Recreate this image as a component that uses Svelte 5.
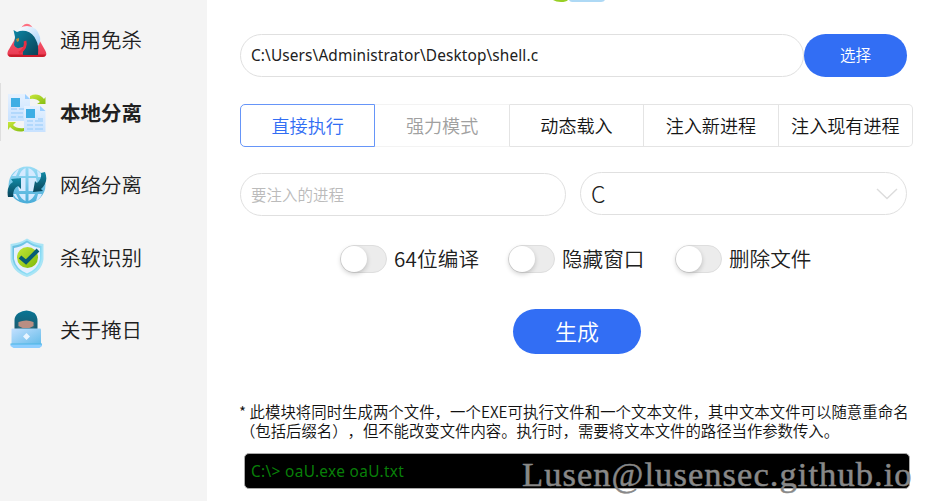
<script>
  const menu = [
    { id: 'trojan', label: '通用免杀' },
    { id: 'files', label: '本地分离' },
    { id: 'globe', label: '网络分离' },
    { id: 'shield', label: '杀软识别' },
    { id: 'hacker', label: '关于掩日' }
  ];
  const modes = ['直接执行', '强力模式', '动态载入', '注入新进程', '注入现有进程'];
  const options = ['64位编译', '隐藏窗口', '删除文件'];
</script>

<div class="app">
  <nav class="sidebar">
    {#each menu as item, i}
      <div class="item" class:active={i === 1}>
        <svg class="icon" viewBox="0 0 40 40" width="40" height="40">
          {#if item.id === 'trojan'}
            <defs>
              <linearGradient id="red" x1="0" y1="0" x2="0" y2="1"><stop offset="0" stop-color="#ff7183" /><stop offset="1" stop-color="#e93850" /></linearGradient>
              <linearGradient id="horse" x1="0" y1="0" x2="1" y2="1"><stop offset="0" stop-color="#0b86a5" /><stop offset="1" stop-color="#0b4055" /></linearGradient>
              <linearGradient id="mane" x1="0" y1="0" x2="1" y2="1"><stop offset="0" stop-color="#fff" /><stop offset="1" stop-color="#a5d1fb" /></linearGradient>
            </defs>
            <path d="M15.500 6Q20 1.500 24.500 6L38.500 31Q41 36.500 36 36.500H4Q-1 36.500 1 31Z" fill="url(#red)" />
            <path d="M1 34.500H39Q38.500 37 36 37H4Q1.500 37 1 34.500" fill="#c91c2b" />
            <path d="M10 13Q12 6 20 6Q30 6 33 17Q34 22 31 26L22 17Z" fill="url(#mane)" />
            <path d="M6.500 10L10 12Q14 10 19 11Q26 13 29 20Q32 25 31 35H16Q15 31 19 26L12 28Q9 29 7 25L8 17Z" fill="url(#horse)" />
            <path d="M18 21Q20 28 12 33" fill="none" stroke="#e72f43" stroke-width="2.800" />
            <path d="M9 19L12 18V21L10 22Z" fill="#b98c3d" />
          {:else if item.id === 'files'}
            <defs>
              <linearGradient id="paper" x1="0" y1="0" x2="0" y2="1"><stop offset="0" stop-color="#e5f1ff" /><stop offset="1" stop-color="#c8e2ff" /></linearGradient>
              <linearGradient id="lime" x1="0" y1="0" x2="1" y2="1"><stop offset="0" stop-color="#c8e73c" /><stop offset="1" stop-color="#86bd12" /></linearGradient>
            </defs>
            <path d="M23 3Q31-1 37 6L38.500 4V11H30L33 9Q29 5 23 6Z" fill="url(#lime)" />
            <path d="M17 38Q9 40 3 34L1 37V29H9L6 32Q10 36 17 35Z" fill="url(#lime)" />
            <path d="M1 1H18L23 6V28H1Z" fill="url(#paper)" />
            <path d="M18 6H23L18 1Z" fill="#9bcfff" />
            <path d="M17 13H34L38.500 18V39H17Z" fill="url(#paper)" />
            <path d="M33 18H38.500L33 13Z" fill="#9bcfff" />
            <path d="M4 5H13V14H4ZM19 16H28V25H19Z" fill="#3eaee4" />
            <path d="M4 16H10M12 16H17M4 20H16M4 24H9M11 24H16M31 26H36M20 28H26M28 28H36M20 32H26M28 32H36M20 36H26M28 36H36" stroke="#a8d3fc" stroke-width="1.500" />
          {:else if item.id === 'globe'}
            <defs>
              <linearGradient id="sphere" x1="0" y1="0" x2="0" y2="1"><stop offset="0" stop-color="#99dcf5" /><stop offset="1" stop-color="#49acd8" /></linearGradient>
              <linearGradient id="arrow" x1="0" y1="0" x2="0" y2="1"><stop offset="0" stop-color="#128aa6" /><stop offset="1" stop-color="#09445a" /></linearGradient>
            </defs>
            <circle cx="20" cy="20" r="18.500" fill="url(#sphere)" />
            <path d="M18.500 3V11H12Q14 5 18.500 3M21.500 3Q27 5 29 11H21.500ZM11 13H18.500V26H12Q10 20 11 13M21.500 13H29Q31 20 29 26H21.500ZM12 29H18.500V36Q14 34 12 29M21.500 29H28Q26 34 21.500 36ZM10 5Q11 5 12 4L9 11H5ZM30 5Q34 8 36 12H31ZM9 29L12 35Q8 33 6 29ZM31 29H35Q33 34 29 36Z" fill="#d5eaff" />
            <path d="M1 32Q-1 21 6 17L4 14L14 13V24L11 21Q6 23 6 32Z" fill="url(#arrow)" />
            <path d="M38 7Q42 17 34 24L36 26L26 27L28 16L30 18Q35 14 34 8Z" fill="url(#arrow)" />
          {:else if item.id === 'shield'}
            <defs>
              <linearGradient id="edge" x1="0" y1="0" x2="1" y2="1"><stop offset="0" stop-color="#64b9dc" /><stop offset="1" stop-color="#9aebff" /></linearGradient>
              <linearGradient id="disc" x1="0" y1="0" x2="1" y2="1"><stop offset="0" stop-color="#c3e638" /><stop offset="1" stop-color="#7fb90b" /></linearGradient>
            </defs>
            <path d="M20 .5Q27 5 36.500 6V21Q35 34 20 39Q5 34 3.500 21V6Q13 5 20 .5Z" fill="#a9e4f5" />
            <path d="M20 2.500Q27 7 34.500 8V21Q33 32 20 37Q7 32 5.500 21V8Q13 7 20 2.500Z" fill="url(#edge)" />
            <path d="M20 4.500Q27 9 33 10V21Q31 31 20 35.500Q9 31 7 21V10Q14 9 20 4.500Z" fill="#e5efff" />
            <circle cx="20.500" cy="19.500" r="10.500" fill="url(#disc)" />
            <path d="M13 19L19 24L31 12" fill="none" stroke="#075c75" stroke-width="4" />
          {:else}
            <defs>
              <linearGradient id="laptop" x1="0" y1="0" x2="1" y2="1"><stop offset="0" stop-color="#c3e0ff" /><stop offset="1" stop-color="#65bce9" /></linearGradient>
              <linearGradient id="hood" x1="0" y1="0" x2="0" y2="1"><stop offset="0" stop-color="#087695" /><stop offset="1" stop-color="#1e5669" /></linearGradient>
            </defs>
            <g transform="translate(-.5 -1)">
              <path d="M8 21V11Q8 7 12 4Q20-1 28 4Q31 7 31 12V22Z" fill="url(#hood)" />
              <path d="M11 14Q20 8 28 14V21H11Z" fill="#28687a" />
              <path d="M12 13Q20 10 27 13V17L23 19H16L12 17Z" fill="#b98e83" />
              <rect x="5" y="19.500" width="29.500" height="16" rx="1" fill="url(#laptop)" />
              <path d="M4 35H35.500V37L33 39H7L4 37Z" fill="#8dceff" />
              <path d="M4 35H35.500" stroke="#4cb6e6" />
              <path d="M20 24L23.500 27.500L20 31L16.500 27.500Z" fill="#e9f5ff" />
            </g>
          {/if}
        </svg>
        <span>{item.label}</span>
      </div>
    {/each}
  </nav>

  <main>
    <div class="logo"><svg width="54" height="2" viewBox="0 0 54 2"><path d="M0 0H15Q13 2 8 2Q3 2 0 0" fill="#98cf24" /><path d="M16 0H52Q51 2 48 2H19Q17 2 16 0" fill="#aed9f5" /></svg></div>

    <div class="file-row">
      <div class="field path"><span>C:\Users\Administrator\Desktop\shell.c</span></div>
      <button class="choose">选择</button>
    </div>

    <div class="modes">
      {#each modes as mode, i}
        <button class:selected={i === 0} class:disabled={i === 1}>{mode}</button>
      {/each}
    </div>

    <div class="inputs">
      <div class="field placeholder">要注入的进程</div>
      <div class="field select">
        <span>C</span>
        <svg width="22" height="12" viewBox="0 0 22 12"><path d="M1 1L11 10.500L21 1" fill="none" stroke="#dcdcdc" stroke-width="1.400" /></svg>
      </div>
    </div>

    <div class="options">
      {#each options as option}
        <label><i class="toggle"></i><span>{option}</span></label>
      {/each}
    </div>

    <button class="generate">生成</button>

    <div class="note">
      <div class="line1">* 此模块将同时生成两个文件，一个EXE可执行文件和一个文本文件，其中文本文件可以随意重命名</div>
      <div class="line2">（包括后缀名），但不能改变文件内容。执行时，需要将文本文件的路径当作参数传入。</div>
    </div>

    <div class="console"><span>C:\&gt; oaU.exe oaU.txt</span></div>
  </main>
  <div class="watermark">Lusen@lusensec.github.io</div>
</div>

<style>
  .app {
    position: relative;
    display: flex;
    width: 930px;
    height: 501px;
    overflow: hidden;
    background: #fff;
    color: #202020;
    font-family: 'Noto Sans', 'Noto Sans CJK SC', sans-serif;
  }
  .app * { box-sizing: border-box; }
  button { padding: 0; font-family: inherit; white-space: nowrap; }

  .sidebar { flex: none; width: 207px; padding-top: 4px; background: #f4f4f4; }
  .item { display: flex; align-items: center; height: 72.5px; padding-left: 7px; gap: 13px; font: 350 20.5px/30px 'Noto Sans CJK SC', sans-serif; }
  .item span { position: relative; top: -1px; }
  .active { font-weight: 700; background: linear-gradient(#dedede, #dedede) 0 6px / 1px 58px no-repeat; }
  .icon { flex: none; }

  main { width: 723px; padding-left: 33px; }
  .logo { height: 2px; padding-left: 313px; }
  .logo svg { display: block; }

  .field { display: flex; align-items: center; height: 43px; border: 1px solid #e0e0e0; border-radius: 22px; padding: 0 10px; }
  .file-row { display: flex; margin-top: 32px; }
  .path { width: 564px; font-size: 15.4px; letter-spacing: 0.12px; }
  .choose { width: 103px; height: 43px; padding-bottom: 2px; border: 0; border-radius: 22px; background: #326ef4; color: #fff; font-size: 15.5px; font-weight: 350; }

  .modes { display: flex; width: 673px; margin-top: 27px; }
  .modes button { flex: 1; height: 43px; padding-bottom: 2px; border: 1px solid #e4e4e4; border-left-width: 0; background: #fff; color: #151515; font: 350 18.1px/38px 'Noto Sans CJK SC', sans-serif; }
  .modes button:first-child { border-radius: 5px 0 0 5px; }
  .modes button:last-child { border-radius: 0 5px 5px 0; }
  .modes .selected { border: 1px solid #6695f8; color: #326ef4; }
  .modes .disabled { border-color: #f3f3f3 #e4e4e4 #f3f3f3 #fff; color: #a0a0a0; }

  .inputs { display: flex; gap: 14px; margin-top: 26px; }
  .placeholder { width: 326px; padding-bottom: 2px; color: #bbb; font: 350 15.5px/24px 'Noto Sans CJK SC', sans-serif; }
  .select { justify-content: space-between; width: 327px; margin-top: -1px; padding: 0 8px 0 10px; font-size: 23px; font-weight: 300; }
  .select span { position: relative; top: -1px; font-family: 'Noto Sans CJK SC', sans-serif; }

  .options { display: flex; margin: 28px 0 0 100px; height: 30px; }
  label { display: flex; align-items: center; gap: 7px; font: 350 20.6px/30px 'Noto Sans CJK SC', sans-serif; white-space: nowrap; }
  label:nth-child(1) { width: 168px; letter-spacing: 0.2px; }
  label:nth-child(2) { width: 167px; }
  label span { position: relative; top: -1px; }
  .toggle { display: block; flex: none; width: 47px; height: 28px; border: 1px solid #dedede; border-radius: 14px; background: #ececec; }
  .toggle::before { content: ''; display: block; width: 26px; height: 26px; border-radius: 50%; background: #fff; box-shadow: 0 2px 5px #0003; }

  .generate { display: block; width: 128px; height: 45px; margin: 35px 0 0 273px; padding-bottom: 3px; border: 0; border-radius: 23px; background: #326ef4; color: #fff; font-size: 22px; font-weight: 350; }

  .note { margin: 48px 0 0 -1px; color: #111; font: 350 15.4px/19px 'Noto Sans CJK SC', sans-serif; white-space: nowrap; text-spacing-trim: space-all; }
  .line1 { letter-spacing: 0.03px; }
  .line2 { padding-left: 1px; letter-spacing: -0.03px; }
  .console { display: flex; align-items: center; width: 666px; height: 36px; margin: 13px 0 0 4px; padding-left: 6px; border: 1px solid #aaa; border-radius: 5px; background: #000; color: #087f08; font-size: 15.4px; letter-spacing: 0.33px; }
  .watermark { position: absolute; left: 522px; top: 452px; color: #888; font: 34.5px/44px 'Liberation Serif', serif; letter-spacing: 1.06px; white-space: nowrap; -webkit-text-stroke: 0.5px #888; }
</style>
